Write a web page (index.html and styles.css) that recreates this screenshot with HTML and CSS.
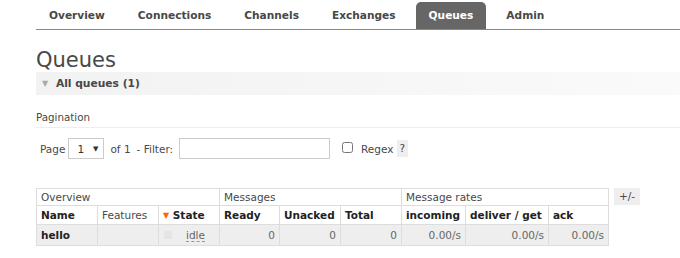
FILE: index.html
```html
<!DOCTYPE html>
<html lang="en">
<head>
    <meta charset="UTF-8">
    <title>RabbitMQ Management - Queues</title>
    <link rel="stylesheet" href="styles.css">
</head>
<body>
    <div class="menu">
        <ul>
            <li><a href="#">Overview</a></li>
            <li><a href="#">Connections</a></li>
            <li><a href="#">Channels</a></li>
            <li><a href="#">Exchanges</a></li>
            <li><a href="#" class="selected">Queues</a></li>
            <li><a href="#">Admin</a></li>
        </ul>
    </div>

    <div class="main">
        <h1>Queues</h1>
        <div class="section">
            <h2><span class="toggle">&#9660;</span> All queues (1)</h2>
        </div>

        <div class="pagination">
            <h3>Pagination</h3>
            <div class="filter">
                <span>Page</span>
                <span class="select">1 <span class="arrow">&#9660;</span></span>
                <span>of 1</span>
                <span>- Filter:</span>
                <input type="text" class="filter-input">
                <input type="checkbox" class="check">
                <span>Regex</span>
                <span class="help">?</span>
            </div>
        </div>

        <div class="table-wrap">
            <table class="list">
                <thead>
                    <tr class="group">
                        <th colspan="3">Overview</th>
                        <th colspan="3">Messages</th>
                        <th colspan="3">Message rates</th>
                    </tr>
                    <tr class="cols">
                        <th class="c-name">Name</th>
                        <th class="c-feat plain">Features</th>
                        <th class="c-state"><span class="sort">&#9660;</span> State</th>
                        <th class="c-ready">Ready</th>
                        <th class="c-unacked">Unacked</th>
                        <th class="c-total">Total</th>
                        <th class="c-in">incoming</th>
                        <th class="c-deliver">deliver / get</th>
                        <th class="c-ack">ack</th>
                    </tr>
                </thead>
                <tbody>
                    <tr>
                        <td class="name">hello</td>
                        <td></td>
                        <td class="state"><span class="box"></span><span class="idle">idle</span></td>
                        <td class="num">0</td>
                        <td class="num">0</td>
                        <td class="num">0</td>
                        <td class="num">0.00/s</td>
                        <td class="num">0.00/s</td>
                        <td class="num">0.00/s</td>
                    </tr>
                </tbody>
            </table>
            <span class="plusminus">+/-</span>
        </div>
    </div>
</body>
</html>
```

FILE: styles.css
```css
/* General */
body {
    font-family: "DejaVu Sans", Verdana, sans-serif;
    font-size: 10.5px;
    color: #484848;
    background: #fff;
    margin: 0;
    padding: 0;
}

/* Menu tabs */
.menu {
    margin-left: 36px;
    border-bottom: 1px solid #888;
    padding-top: 2px;
}

.menu ul {
    list-style: none;
    margin: 0;
    padding: 0;
    display: flex;
    gap: 7px;
}

.menu a {
    display: block;
    padding: 0 13px;
    height: 27px;
    line-height: 27px;
    font-weight: bold;
    font-size: 10.6px;
    color: #484848;
    text-decoration: none;
    border-radius: 5px 5px 0 0;
}

.menu a.selected {
    background: #666;
    color: #fff;
}

/* Main */
.main {
    padding-left: 36px;
}

h1 {
    font-size: 21px;
    font-weight: normal;
    color: #484848;
    margin: 18px 0 0;
    line-height: 24px;
}

.section h2 {
    margin: 0;
    height: 23px;
    line-height: 23px;
    font-size: 10.7px;
    font-weight: bold;
    color: #484848;
    background: linear-gradient(to right, #f2f2f2, #f7f7f7 60%, #fafafa);
    padding-left: 6px;
}

.toggle {
    color: #aaa;
    font-size: 8px;
    margin-right: 4px;
    vertical-align: 1px;
}

/* Pagination */
.pagination h3 {
    margin: 16px 0 0;
    font-size: 10.3px;
    font-weight: normal;
    color: #484848;
    padding-bottom: 4px;
    border-bottom: 1px solid #eee;
}

.filter {
    display: flex;
    align-items: center;
    gap: 6px;
    margin-top: 10px;
    padding-left: 4px;
    height: 21px;
}

.select {
    display: inline-flex;
    align-items: center;
    justify-content: space-between;
    box-sizing: border-box;
    width: 36px;
    height: 21px;
    border: 1px solid #ccc;
    padding: 0 5px 0 8px;
    margin-left: -3px;
    color: #333;
}

.select .arrow {
    font-size: 7px;
    color: #333;
}

.filter-input {
    box-sizing: border-box;
    width: 151px;
    height: 21px;
    border: 1px solid #ccc;
    margin: 0 6px 0 0;
    padding: 0;
}

.check {
    width: 11px;
    height: 11px;
    margin: 0 2px 2px 0;
}

.help {
    background: #eee;
    padding: 2px 3px;
    margin-left: -3px;
    line-height: 13px;
}

/* Table */
.table-wrap {
    display: flex;
    align-items: flex-start;
    gap: 5px;
    margin-top: 29px;
}

table.list {
    border-collapse: collapse;
    border: 1px solid #ddd;
}

table.list th,
table.list td {
    border: 1px solid #ddd;
    padding: 0 4px;
    text-align: left;
    white-space: nowrap;
}

tr.group th {
    font-weight: normal;
    height: 16px;
    color: #484848;
}

tr.cols th {
    height: 18px;
    font-weight: bold;
    color: #222;
}

tr.cols th.plain {
    font-weight: normal;
    color: #484848;
}

.c-name { width: 52px; }
.c-feat { width: 52px; }
.c-state { width: 52px; }
.c-ready { width: 51px; }
.c-unacked { width: 52px; }
.c-total { width: 52px; }
.c-in { width: 55px; }
.c-deliver { width: 74px; }
.c-ack { width: 51px; }

.sort {
    color: #f60;
    font-size: 8px;
    vertical-align: 1px;
}

table.list tbody td {
    background: #eee;
    height: 20px;
}

table.list td.name {
    font-weight: bold;
    color: #222;
}

table.list td.num {
    text-align: right;
    color: #666;
}

table.list td.state {
    color: #666;
}

.box {
    display: inline-block;
    width: 8px;
    height: 8px;
    background: #e4e4e4;
    margin: 0 14px 0 1px;
}

.idle {
    border-bottom: 1px dashed #999;
}

.plusminus {
    background: #eee;
    color: #484848;
    padding: 2px 5px;
    line-height: 13px;
}
```
